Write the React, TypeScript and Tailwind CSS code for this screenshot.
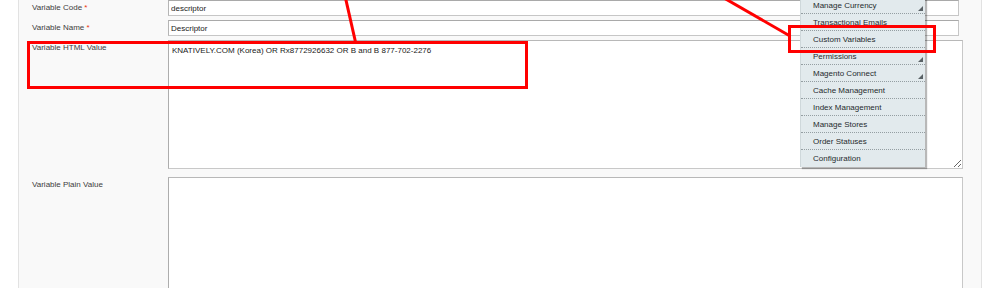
import React from "react";

const menuItems: { label: string; arrow?: boolean }[] = [
  { label: "Manage Currency", arrow: true },
  { label: "Transactional Emails" },
  { label: "Custom Variables" },
  { label: "Permissions", arrow: true },
  { label: "Magento Connect", arrow: true },
  { label: "Cache Management" },
  { label: "Index Management" },
  { label: "Manage Stores" },
  { label: "Order Statuses" },
  { label: "Configuration" },
];

function Label({ text, required }: { text: string; required?: boolean }) {
  return (
    <div className="w-[136px] shrink-0 pl-[13px] pt-[1px] leading-[14px] text-[#3d3d3d]">
      {text}
      {required && <span className="text-[#eb340a]"> *</span>}
    </div>
  );
}

export default function App() {
  return (
    <div className="relative w-[1000px] h-[288px] overflow-hidden bg-white font-['Liberation_Sans',Arial,sans-serif] text-[8px]">
      <div className="ml-[18px] w-[964px] h-full border-x border-[#e2e2e2] bg-[#f9f9f9]">
        <div className="flex flex-col">
          <div className="flex">
            <Label text="Variable Code" required />
            <input
              readOnly
              value="descriptor"
              className="ml-[13px] w-[791px] h-[16px] border border-[#c6c6c6] border-t-[#a9a9a9] border-l-[#b5b5b5] bg-white px-[2px] pt-[1px] text-[8px] text-[#222] outline-none"
            />
          </div>
          <div className="flex mt-[4px]">
            <Label text="Variable Name" required />
            <input
              readOnly
              value="Descriptor"
              className="ml-[13px] w-[791px] h-[16px] border border-[#c6c6c6] border-t-[#a9a9a9] border-l-[#b5b5b5] bg-white px-[2px] pt-[1px] text-[8px] text-[#222] outline-none"
            />
          </div>
          <div className="flex mt-[4px]">
            <Label text="Variable HTML Value" />
            <textarea
              readOnly
              value="KNATIVELY.COM (Korea) OR Rx8772926632 OR B and B 877-702-2276"
              className="ml-[13px] w-[795px] h-[129px] border border-[#c8c8c8] border-l-[#adadad] border-t-[#b8b8b8] bg-white px-[3px] pt-[4px] text-[8px] leading-[11px] text-[#222] outline-none"
            />
          </div>
          <div className="flex mt-[8px]">
            <Label text="Variable Plain Value" />
            <textarea
              readOnly
              value=""
              className="ml-[13px] w-[795px] h-[130px] border border-[#c8c8c8] border-l-[#adadad] border-t-[#b8b8b8] bg-white px-[3px] py-[3px] text-[8px] text-[#222] outline-none"
            />
          </div>
        </div>
      </div>

      {/* dropdown menu */}
      <div className="absolute left-[800px] top-[-3px] w-[125px] border-l border-[#cfd8db] bg-[#e2eaed] shadow-[2px_2px_1px_rgba(0,0,0,0.28)]">
        {menuItems.map((item, i) => (
          <div
            key={item.label}
            className={
              "relative flex h-[17px] items-center pl-[12px] pt-[1px] text-[8px] text-[#262a2d] " +
              (i < menuItems.length - 1 ? "border-b border-dotted border-[#949ea2]" : "")
            }
          >
            {item.label}
            {item.arrow && (
              <svg
                className="absolute right-[2px] bottom-[2px]"
                width="5"
                height="5"
                viewBox="0 0 5 5"
              >
                <polygon points="5,0 5,5 0,5" fill="#5a6266" />
              </svg>
            )}
          </div>
        ))}
      </div>

      {/* red annotations */}
      <svg
        className="absolute left-0 top-0 pointer-events-none"
        width="1000"
        height="288"
        viewBox="0 0 1000 288"
      >
        <rect x="28.5" y="42.5" width="498" height="45" fill="none" stroke="#f00" strokeWidth="3" />
        <line x1="345.5" y1="-2" x2="355.5" y2="42" stroke="#f00" strokeWidth="3" />
        <rect x="789.5" y="26.5" width="145" height="25" fill="none" stroke="#f00" strokeWidth="3" />
        <line x1="724" y1="-2" x2="790" y2="36" stroke="#f00" strokeWidth="3" />
      </svg>
    </div>
  );
}
